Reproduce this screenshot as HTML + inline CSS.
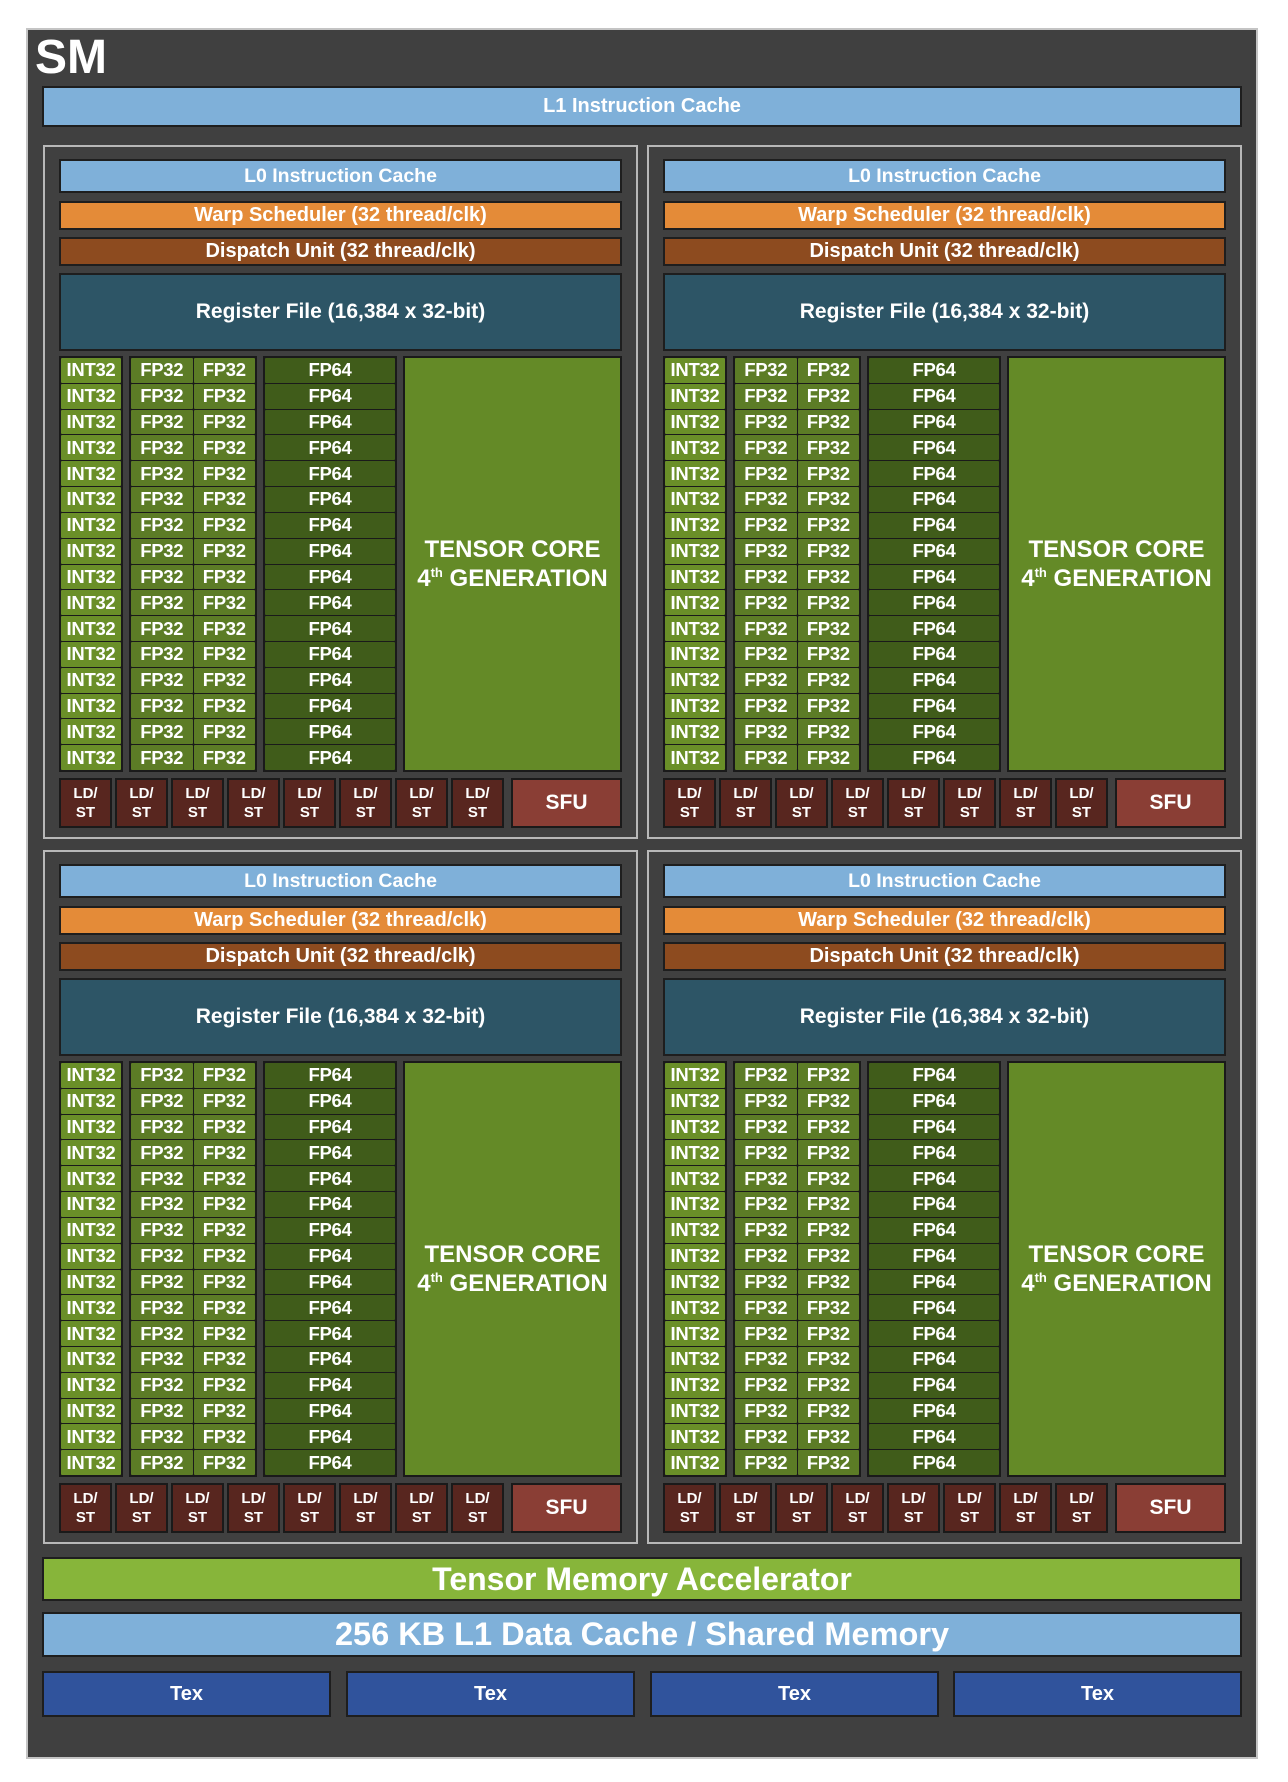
<!DOCTYPE html>
<html><head><meta charset="utf-8"><style>
*{box-sizing:border-box;margin:0;padding:0}
body{width:1288px;height:1782px;background:#fff;position:relative;font-family:"Liberation Sans",Arial,sans-serif;font-weight:bold;color:#fff;overflow:hidden}
.a{position:absolute}
.outer{left:26px;top:28px;width:1232px;height:1731px;background:#404040;border:2px solid #c4c4c4}
.bar{position:absolute;display:flex;align-items:center;justify-content:center;border:2px solid #1e1e1e;white-space:nowrap}
.quad{position:absolute;width:595px;height:694px;border:2px solid #b8b8b8}
.col{position:absolute;top:209px;height:416px;border:2px solid #1a1a1a;background:#1a1a1a;display:flex;flex-direction:column;gap:1px}
.col div{flex:1;display:flex;align-items:center;justify-content:center;font-size:18.5px;letter-spacing:-0.3px;border-radius:1px}
.i div{background:#6a8f28}
.f{display:grid !important;grid-template-columns:1fr 1fr;grid-auto-rows:1fr;gap:1px}
.f div{background:#5c7c26}
.d div{background:#405c1a}
.t{position:absolute;left:358px;top:209px;width:219px;height:416px;background:#648a27;border:2px solid #1a1a1a;display:flex;flex-direction:column;align-items:center;justify-content:center;font-size:24px;line-height:29px;text-align:center;white-space:nowrap}
.ld{position:absolute;top:631px;width:53px;height:50px;background:#58261f;border:2px solid #1a1a1a;display:flex;align-items:center;justify-content:center;text-align:center;font-size:15px;line-height:19px}
.sfu{position:absolute;top:631px;left:466px;width:111px;height:50px;background:#8a3e35;border:2px solid #1a1a1a;display:flex;align-items:center;justify-content:center;font-size:21px}
sup{font-size:13px;vertical-align:9px;line-height:0}
.l0{font-size:19.5px}.ws{font-size:20px}.rf{font-size:21px}
</style></head><body>
<div class="a outer"></div>
<div class="a" style="left:35px;top:30px;font-size:48px;line-height:56px">SM</div>
<div class="bar" style="left:42px;top:86px;width:1200px;height:41px;background:#7fb0d9;font-size:20px">L1 Instruction Cache</div>

<div class="quad" style="left:43px;top:145px">
<div class="bar l0" style="left:14px;top:12px;width:563px;height:34px;background:#7fb0d9">L0 Instruction Cache</div>
<div class="bar ws" style="left:14px;top:54px;width:563px;height:29px;background:#e48b38">Warp Scheduler (32 thread/clk)</div>
<div class="bar ws" style="left:14px;top:90px;width:563px;height:29px;background:#8d4b1f">Dispatch Unit (32 thread/clk)</div>
<div class="bar rf" style="left:14px;top:126px;width:563px;height:78px;background:#2d5566">Register File (16,384 x 32-bit)</div>
<div class="col i" style="left:14px;width:64px"><div>INT32</div><div>INT32</div><div>INT32</div><div>INT32</div><div>INT32</div><div>INT32</div><div>INT32</div><div>INT32</div><div>INT32</div><div>INT32</div><div>INT32</div><div>INT32</div><div>INT32</div><div>INT32</div><div>INT32</div><div>INT32</div></div>
<div class="col f" style="left:84px;width:128px"><div>FP32</div><div>FP32</div><div>FP32</div><div>FP32</div><div>FP32</div><div>FP32</div><div>FP32</div><div>FP32</div><div>FP32</div><div>FP32</div><div>FP32</div><div>FP32</div><div>FP32</div><div>FP32</div><div>FP32</div><div>FP32</div><div>FP32</div><div>FP32</div><div>FP32</div><div>FP32</div><div>FP32</div><div>FP32</div><div>FP32</div><div>FP32</div><div>FP32</div><div>FP32</div><div>FP32</div><div>FP32</div><div>FP32</div><div>FP32</div><div>FP32</div><div>FP32</div></div>
<div class="col d" style="left:218px;width:134px"><div>FP64</div><div>FP64</div><div>FP64</div><div>FP64</div><div>FP64</div><div>FP64</div><div>FP64</div><div>FP64</div><div>FP64</div><div>FP64</div><div>FP64</div><div>FP64</div><div>FP64</div><div>FP64</div><div>FP64</div><div>FP64</div></div>
<div class="t"><div>TENSOR CORE</div><div>4<sup>th</sup> GENERATION</div></div>
<div class="ld" style="left:14px">LD/<br>ST</div><div class="ld" style="left:70px">LD/<br>ST</div><div class="ld" style="left:126px">LD/<br>ST</div><div class="ld" style="left:182px">LD/<br>ST</div><div class="ld" style="left:238px">LD/<br>ST</div><div class="ld" style="left:294px">LD/<br>ST</div><div class="ld" style="left:350px">LD/<br>ST</div><div class="ld" style="left:406px">LD/<br>ST</div>
<div class="sfu">SFU</div>
</div>

<div class="quad" style="left:647px;top:145px">
<div class="bar l0" style="left:14px;top:12px;width:563px;height:34px;background:#7fb0d9">L0 Instruction Cache</div>
<div class="bar ws" style="left:14px;top:54px;width:563px;height:29px;background:#e48b38">Warp Scheduler (32 thread/clk)</div>
<div class="bar ws" style="left:14px;top:90px;width:563px;height:29px;background:#8d4b1f">Dispatch Unit (32 thread/clk)</div>
<div class="bar rf" style="left:14px;top:126px;width:563px;height:78px;background:#2d5566">Register File (16,384 x 32-bit)</div>
<div class="col i" style="left:14px;width:64px"><div>INT32</div><div>INT32</div><div>INT32</div><div>INT32</div><div>INT32</div><div>INT32</div><div>INT32</div><div>INT32</div><div>INT32</div><div>INT32</div><div>INT32</div><div>INT32</div><div>INT32</div><div>INT32</div><div>INT32</div><div>INT32</div></div>
<div class="col f" style="left:84px;width:128px"><div>FP32</div><div>FP32</div><div>FP32</div><div>FP32</div><div>FP32</div><div>FP32</div><div>FP32</div><div>FP32</div><div>FP32</div><div>FP32</div><div>FP32</div><div>FP32</div><div>FP32</div><div>FP32</div><div>FP32</div><div>FP32</div><div>FP32</div><div>FP32</div><div>FP32</div><div>FP32</div><div>FP32</div><div>FP32</div><div>FP32</div><div>FP32</div><div>FP32</div><div>FP32</div><div>FP32</div><div>FP32</div><div>FP32</div><div>FP32</div><div>FP32</div><div>FP32</div></div>
<div class="col d" style="left:218px;width:134px"><div>FP64</div><div>FP64</div><div>FP64</div><div>FP64</div><div>FP64</div><div>FP64</div><div>FP64</div><div>FP64</div><div>FP64</div><div>FP64</div><div>FP64</div><div>FP64</div><div>FP64</div><div>FP64</div><div>FP64</div><div>FP64</div></div>
<div class="t"><div>TENSOR CORE</div><div>4<sup>th</sup> GENERATION</div></div>
<div class="ld" style="left:14px">LD/<br>ST</div><div class="ld" style="left:70px">LD/<br>ST</div><div class="ld" style="left:126px">LD/<br>ST</div><div class="ld" style="left:182px">LD/<br>ST</div><div class="ld" style="left:238px">LD/<br>ST</div><div class="ld" style="left:294px">LD/<br>ST</div><div class="ld" style="left:350px">LD/<br>ST</div><div class="ld" style="left:406px">LD/<br>ST</div>
<div class="sfu">SFU</div>
</div>

<div class="quad" style="left:43px;top:850px">
<div class="bar l0" style="left:14px;top:12px;width:563px;height:34px;background:#7fb0d9">L0 Instruction Cache</div>
<div class="bar ws" style="left:14px;top:54px;width:563px;height:29px;background:#e48b38">Warp Scheduler (32 thread/clk)</div>
<div class="bar ws" style="left:14px;top:90px;width:563px;height:29px;background:#8d4b1f">Dispatch Unit (32 thread/clk)</div>
<div class="bar rf" style="left:14px;top:126px;width:563px;height:78px;background:#2d5566">Register File (16,384 x 32-bit)</div>
<div class="col i" style="left:14px;width:64px"><div>INT32</div><div>INT32</div><div>INT32</div><div>INT32</div><div>INT32</div><div>INT32</div><div>INT32</div><div>INT32</div><div>INT32</div><div>INT32</div><div>INT32</div><div>INT32</div><div>INT32</div><div>INT32</div><div>INT32</div><div>INT32</div></div>
<div class="col f" style="left:84px;width:128px"><div>FP32</div><div>FP32</div><div>FP32</div><div>FP32</div><div>FP32</div><div>FP32</div><div>FP32</div><div>FP32</div><div>FP32</div><div>FP32</div><div>FP32</div><div>FP32</div><div>FP32</div><div>FP32</div><div>FP32</div><div>FP32</div><div>FP32</div><div>FP32</div><div>FP32</div><div>FP32</div><div>FP32</div><div>FP32</div><div>FP32</div><div>FP32</div><div>FP32</div><div>FP32</div><div>FP32</div><div>FP32</div><div>FP32</div><div>FP32</div><div>FP32</div><div>FP32</div></div>
<div class="col d" style="left:218px;width:134px"><div>FP64</div><div>FP64</div><div>FP64</div><div>FP64</div><div>FP64</div><div>FP64</div><div>FP64</div><div>FP64</div><div>FP64</div><div>FP64</div><div>FP64</div><div>FP64</div><div>FP64</div><div>FP64</div><div>FP64</div><div>FP64</div></div>
<div class="t"><div>TENSOR CORE</div><div>4<sup>th</sup> GENERATION</div></div>
<div class="ld" style="left:14px">LD/<br>ST</div><div class="ld" style="left:70px">LD/<br>ST</div><div class="ld" style="left:126px">LD/<br>ST</div><div class="ld" style="left:182px">LD/<br>ST</div><div class="ld" style="left:238px">LD/<br>ST</div><div class="ld" style="left:294px">LD/<br>ST</div><div class="ld" style="left:350px">LD/<br>ST</div><div class="ld" style="left:406px">LD/<br>ST</div>
<div class="sfu">SFU</div>
</div>

<div class="quad" style="left:647px;top:850px">
<div class="bar l0" style="left:14px;top:12px;width:563px;height:34px;background:#7fb0d9">L0 Instruction Cache</div>
<div class="bar ws" style="left:14px;top:54px;width:563px;height:29px;background:#e48b38">Warp Scheduler (32 thread/clk)</div>
<div class="bar ws" style="left:14px;top:90px;width:563px;height:29px;background:#8d4b1f">Dispatch Unit (32 thread/clk)</div>
<div class="bar rf" style="left:14px;top:126px;width:563px;height:78px;background:#2d5566">Register File (16,384 x 32-bit)</div>
<div class="col i" style="left:14px;width:64px"><div>INT32</div><div>INT32</div><div>INT32</div><div>INT32</div><div>INT32</div><div>INT32</div><div>INT32</div><div>INT32</div><div>INT32</div><div>INT32</div><div>INT32</div><div>INT32</div><div>INT32</div><div>INT32</div><div>INT32</div><div>INT32</div></div>
<div class="col f" style="left:84px;width:128px"><div>FP32</div><div>FP32</div><div>FP32</div><div>FP32</div><div>FP32</div><div>FP32</div><div>FP32</div><div>FP32</div><div>FP32</div><div>FP32</div><div>FP32</div><div>FP32</div><div>FP32</div><div>FP32</div><div>FP32</div><div>FP32</div><div>FP32</div><div>FP32</div><div>FP32</div><div>FP32</div><div>FP32</div><div>FP32</div><div>FP32</div><div>FP32</div><div>FP32</div><div>FP32</div><div>FP32</div><div>FP32</div><div>FP32</div><div>FP32</div><div>FP32</div><div>FP32</div></div>
<div class="col d" style="left:218px;width:134px"><div>FP64</div><div>FP64</div><div>FP64</div><div>FP64</div><div>FP64</div><div>FP64</div><div>FP64</div><div>FP64</div><div>FP64</div><div>FP64</div><div>FP64</div><div>FP64</div><div>FP64</div><div>FP64</div><div>FP64</div><div>FP64</div></div>
<div class="t"><div>TENSOR CORE</div><div>4<sup>th</sup> GENERATION</div></div>
<div class="ld" style="left:14px">LD/<br>ST</div><div class="ld" style="left:70px">LD/<br>ST</div><div class="ld" style="left:126px">LD/<br>ST</div><div class="ld" style="left:182px">LD/<br>ST</div><div class="ld" style="left:238px">LD/<br>ST</div><div class="ld" style="left:294px">LD/<br>ST</div><div class="ld" style="left:350px">LD/<br>ST</div><div class="ld" style="left:406px">LD/<br>ST</div>
<div class="sfu">SFU</div>
</div>

<div class="bar" style="left:42px;top:1557px;width:1200px;height:44px;background:#87b53a;font-size:32px">Tensor Memory Accelerator</div>
<div class="bar" style="left:42px;top:1612px;width:1200px;height:45px;background:#7fb0d9;font-size:32.5px">256 KB L1 Data Cache / Shared Memory</div>
<div class="bar" style="left:42px;top:1671px;width:289px;height:46px;background:#30539c;font-size:20px">Tex</div>
<div class="bar" style="left:346px;top:1671px;width:289px;height:46px;background:#30539c;font-size:20px">Tex</div>
<div class="bar" style="left:650px;top:1671px;width:289px;height:46px;background:#30539c;font-size:20px">Tex</div>
<div class="bar" style="left:953px;top:1671px;width:289px;height:46px;background:#30539c;font-size:20px">Tex</div>
</body></html>
